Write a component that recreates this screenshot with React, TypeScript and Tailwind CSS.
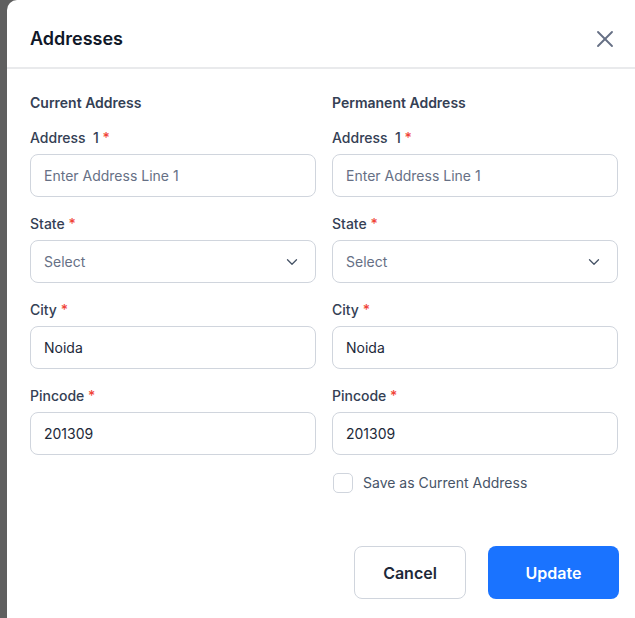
import { X, ChevronDown } from "lucide-react";

function Label({ text }: { text: string }) {
  return (
    <div className="h-5 text-[14px] leading-5 font-medium text-[#344054]">
      {text} <span className="text-[#f04438]">*</span>
    </div>
  );
}

function Field({ label, value, placeholder, select }: any) {
  return (
    <div className="flex flex-col gap-[6px] mb-[17px]">
      <Label text={label} />
      <div className="h-[43px] rounded-[8px] border border-[#d0d5dd] flex items-center justify-between px-[13px] text-[14px]">
        {value ? (
          <span className="text-[#1d2939]">{value}</span>
        ) : (
          <span className="text-[#667085]">{placeholder}</span>
        )}
        {select && <ChevronDown size={18} strokeWidth={1.75} className="text-[#475467] mr-[1px]" />}
      </div>
    </div>
  );
}

function Column({ title }: { title: string }) {
  return (
    <div className="flex flex-col">
      <div className="h-5 text-[14px] leading-5 font-semibold text-[#344054] mb-[15px]">{title}</div>
      <Field label={"Address\u00a0 1"} placeholder="Enter Address Line 1" />
      <Field label="State" placeholder="Select" select />
      <Field label="City" value="Noida" />
      <Field label="Pincode" value="201309" />
    </div>
  );
}

export default function App() {
  return (
    <div
      className="w-[635px] h-[618px] flex bg-[#5f5f5f] overflow-hidden"
      style={{ fontFamily: "Inter, 'Noto Sans', sans-serif" }}
    >
      <div className="ml-[7px] flex-1 bg-white rounded-tl-[10px] flex flex-col">
        <div className="h-[69px] border-b-2 border-[#e9eaec] flex items-center justify-between pl-[23px] pr-[16px] pt-[10px]">
          <div className="text-[18px] font-semibold text-[#101828]">Addresses</div>
          <X size={28} strokeWidth={1.6} className="text-[#667085]" />
        </div>
        <div className="pl-[23px] pt-[24px]">
          <div className="w-[588px] grid grid-cols-2 gap-x-4">
            <Column title="Current Address" />
            <div className="flex flex-col">
              <Column title="Permanent Address" />
              <div className="flex items-center gap-[10px] ml-[1px]">
                <div className="w-5 h-5 rounded-[5px] border border-[#d0d5dd]" />
                <span className="text-[14px] text-[#475467]">Save as Current Address</span>
              </div>
            </div>
          </div>
          <div className="w-[589px] flex justify-end gap-[22px] mt-[53px]">
            <button className="w-[112px] h-[53px] rounded-[8px] border border-[#d0d5dd] text-[16px] font-semibold text-[#1d2939]">
              Cancel
            </button>
            <button className="w-[131px] h-[53px] rounded-[8px] bg-[#1a73ff] text-[16px] font-semibold text-white">
              Update
            </button>
          </div>
        </div>
      </div>
    </div>
  );
}
